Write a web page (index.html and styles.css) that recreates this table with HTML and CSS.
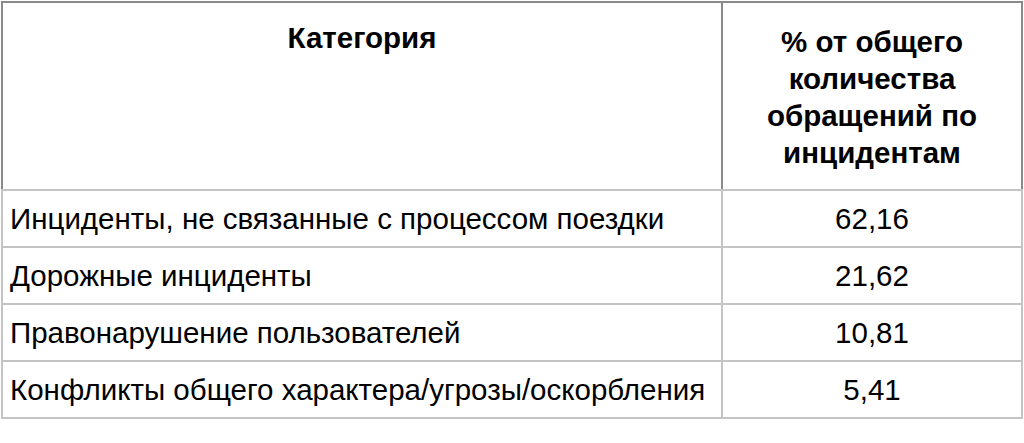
FILE: index.html
```html
<!DOCTYPE html>
<html lang="ru">
<head>
<meta charset="utf-8">
<link rel="stylesheet" href="styles.css">
</head>
<body>
<table class="stats">
  <colgroup>
    <col class="col-cat">
    <col class="col-pct">
  </colgroup>
  <thead>
    <tr>
      <th class="th-cat">Категория</th>
      <th class="th-pct">% от общего количества обращений по инцидентам</th>
    </tr>
  </thead>
  <tbody>
    <tr><td class="cat">Инциденты, не связанные с процессом поездки</td><td class="pct">62,16</td></tr>
    <tr><td class="cat">Дорожные инциденты</td><td class="pct">21,62</td></tr>
    <tr><td class="cat">Правонарушение пользователей</td><td class="pct">10,81</td></tr>
    <tr><td class="cat">Конфликты общего характера/угрозы/оскорбления</td><td class="pct">5,41</td></tr>
  </tbody>
</table>
</body>
</html>
```

FILE: styles.css
```css
html, body {
  margin: 0;
  padding: 0;
  background: #ffffff;
}
body {
  padding: 1px;
  font-family: "Liberation Sans", Arial, sans-serif;
  color: #000000;
}
.stats {
  border-collapse: collapse;
  table-layout: fixed;
  width: 1022px;
  font-size: 29.5px;
}
.col-cat {
  width: 720px;
}
.stats th {
  font-weight: bold;
  vertical-align: top;
  text-align: center;
  line-height: 37px;
  border: 2px solid #8a8a8a;
  border-bottom: 2px solid #c4c4c4;
}
.stats th.th-cat {
  padding: 16px 12px 20px;
}
.stats th.th-pct {
  padding: 20px 12px 18px;
}
.stats td {
  height: 55px;
  padding: 0 7px;
  line-height: 32px;
  border: 2px solid #c4c4c4;
  vertical-align: middle;
  white-space: nowrap;
}
.stats td.cat {
  text-align: left;
}
.stats td.pct {
  text-align: center;
}
```
